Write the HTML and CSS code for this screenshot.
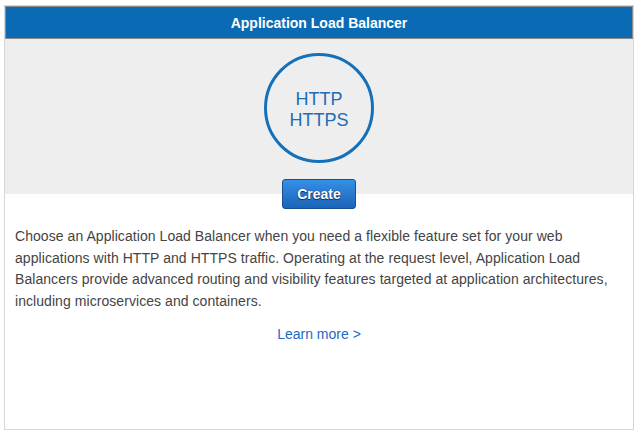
FILE: index.html
```html
<!DOCTYPE html>
<html>
<head>
<meta charset="utf-8">
<link rel="stylesheet" href="styles.css">
</head>
<body>
<div class="card">
  <div class="header">Application Load Balancer</div>
  <div class="hero">
    <div class="circle">
      <span>HTTP</span>
      <span>HTTPS</span>
    </div>
    <button class="create">Create</button>
  </div>
  <p class="desc">Choose an Application Load Balancer when you need a flexible feature set for your web applications with HTTP and HTTPS traffic. Operating at the request level, Application Load Balancers provide advanced routing and visibility features targeted at application architectures, including microservices and containers.</p>
  <div class="more"><a href="#">Learn more &gt;</a></div>
</div>
</body>
</html>
```
FILE: styles.css
```css
html, body {
  margin: 0;
  padding: 0;
  background: #fff;
}
body {
  font-family: "Liberation Sans", Arial, Helvetica, sans-serif;
  padding: 5px 0 0 4px;
}
.card {
  width: 630px;
  height: 425px;
  box-sizing: border-box;
  border: 1px solid #d6d6d6;
  display: flex;
  flex-direction: column;
}
.header {
  height: 33px;
  box-sizing: border-box;
  background: #0a6ab4;
  border: 1px solid #8d8d8d;
  color: #fff;
  font-weight: bold;
  font-size: 14px;
  display: flex;
  align-items: center;
  justify-content: center;
}
.hero {
  height: 171px;
  box-sizing: border-box;
  padding-top: 14px;
  background: linear-gradient(#eeeeee 0, #eeeeee 155px, #fff 155px);
  display: flex;
  flex-direction: column;
  align-items: center;
}
.circle {
  width: 110px;
  height: 110px;
  box-sizing: border-box;
  border: 3px solid #1470b9;
  border-radius: 50%;
  display: flex;
  flex-direction: column;
  align-items: center;
  justify-content: center;
  padding-top: 3px;
  color: #1d6db7;
  font-size: 18px;
  line-height: 21px;
}
.create {
  margin-top: 16px;
  width: 74px;
  height: 30px;
  box-sizing: border-box;
  border: 1px solid #1b4f8c;
  border-radius: 3px;
  background: linear-gradient(#3590e6, #1a64b9);
  color: #fff;
  font-family: "Liberation Sans", Arial, Helvetica, sans-serif;
  font-weight: bold;
  font-size: 14px;
  text-shadow: 0 1px 1px #0b2f5c, 0 0 1px #0b2f5c;
  padding: 0;
}
.desc {
  margin: 16px 0 0;
  padding: 0 10px;
  color: #444;
  font-size: 14px;
  letter-spacing: 0.06px;
  line-height: 21.5px;
}
.more {
  margin-top: 12px;
  text-align: center;
  font-size: 14px;
  line-height: 21.5px;
}
.more a {
  color: #1a6bc3;
  text-decoration: none;
}
```
